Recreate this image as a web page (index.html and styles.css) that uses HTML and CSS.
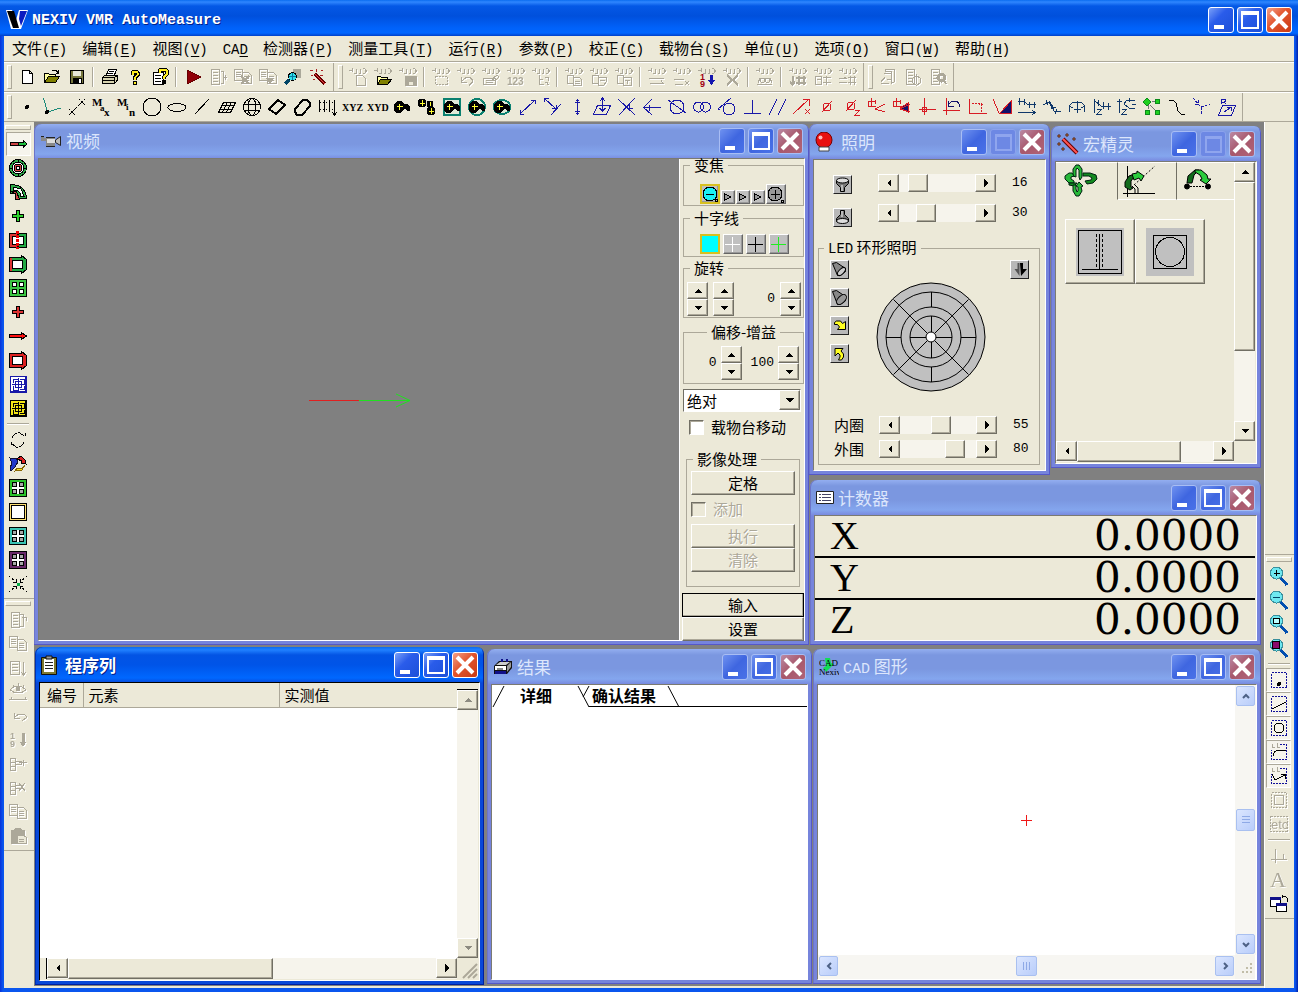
FILE: index.html
```html
<!DOCTYPE html>
<html lang="zh-CN">
<head>
<meta charset="utf-8">
<title>NEXIV VMR AutoMeasure</title>
<link rel="stylesheet" href="styles.css">
</head>
<body>
<svg class="defs" aria-hidden="true">
  <symbol id="hooks" viewBox="0 0 20 20"><path d="M4.500 1v4M1 3.500h3M8.500 2v4.500h-3M12.500 2v4.500h-2M14.500 1.500h2l1.500 2v1l-1.500 2h-2"/></symbol>
  <symbol id="doc" viewBox="0 0 20 20"><path d="M3.500 2.500h8v15h-8zM5 5.500h5M5 8.500h5M5 11.500h5M5 14.500h5"/></symbol>
  <symbol id="docs" viewBox="0 0 20 20"><path d="M1.500 2.500h8v11h-8zM3 5.500h5M3 7.500h5M3 9.500h5M9.500 5.500h6l3 3v8h-9zM11 9.500h5M11 11.500h5M11 13.500h5"/></symbol>
  <symbol id="blob" viewBox="0 0 20 20"><path d="M4 5l2-1h3l3 3h3l3 2v5h-3l-1-2h-2l-2 3-2 1H4l-2-2V8z" fill="#000" stroke="none"/><path d="M7.500 7v6M5 9.500h6" stroke="#ff3"/></symbol>
  <symbol id="lens" viewBox="0 0 20 20"><path d="M11 11l7 8" stroke="#024fb0" stroke-width="3"/><circle cx="7.500" cy="7" r="6" fill="#6ee8f0" stroke="#3a8f9c"/></symbol>
  <symbol id="grid4" viewBox="0 0 20 20"><path d="M1.500 1.500h17v17h-17z" fill="currentColor"/><path d="M4 4h12v12H4z" fill="#fff" stroke="none"/><path d="M4.500 4.500h4v4h-4zM11.500 4.500h4v4h-4zM4.500 11.500h4v4h-4zM11.500 11.500h4v4h-4z" fill="#a8a8a8"/></symbol>
  <symbol id="maze" viewBox="0 0 20 20"><path d="M2.500 2.500h15v15h-15zM10.500 4v13M4 10.500h13M5.500 9v-4h4M12 5.500h4v4M5.500 12v4h4M12 15.500h4v-4M7.500 7.500h6v6h-6z"/></symbol>
  <symbol id="min" viewBox="0 0 26 26"><path d="M6 18h10v4h-10z" fill="#fff" stroke="none"/></symbol>
  <symbol id="max" viewBox="0 0 26 26"><path d="M4 4h18v18h-18zM6 8v12h14v-12z" fill="#fff" fill-rule="evenodd" stroke="none"/></symbol>
  <symbol id="dim" viewBox="0 0 26 26"><path d="M5 5h17v17h-17zM7 8v12h13v-12z" fill="#8fa5ee" fill-rule="evenodd" stroke="none"/></symbol>
  <symbol id="close" viewBox="0 0 26 26"><path d="M5 5l16 16M21 5L5 21" stroke="#fff" stroke-width="4"/></symbol>
  <symbol id="up" viewBox="0 0 8 8"><path d="M0 6h8L4 2z"/></symbol>
  <symbol id="down" viewBox="0 0 8 8"><path d="M0 2h8L4 6z"/></symbol>
  <symbol id="left" viewBox="0 0 8 8"><path d="M6 0v8L2 4z"/></symbol>
  <symbol id="right" viewBox="0 0 8 8"><path d="M2 0v8l4-4z"/></symbol>
</svg>

<div class="app">
  <header class="apptitle">
    <svg class="logo" width="22" height="20"><path d="M0 0h6l4 10 3-10h9l-7 19h-10z" fill="#fff"/><path d="M1 1h7l5 17h-6z" fill="#000"/><path d="M14 1h7l-6 15-2-7z" fill="#0b1bc0"/></svg>
    <h1>NEXIV VMR AutoMeasure</h1>
    <div class="wbtns">
      <button class="wb" aria-label="最小化"><svg><use href="#min"/></svg></button>
      <button class="wb" aria-label="最大化"><svg><use href="#max"/></svg></button>
      <button class="wb red" aria-label="关闭"><svg><use href="#close"/></svg></button>
    </div>
  </header>

  <nav class="menu">
    <a href="#">文件<span>(<u>F</u>)</span></a>
    <a href="#">编辑<span>(<u>E</u>)</span></a>
    <a href="#">视图<span>(<u>V</u>)</span></a>
    <a href="#"><span>CA<u>D</u></span></a>
    <a href="#">检测器<span>(<u>P</u>)</span></a>
    <a href="#">测量工具<span>(<u>T</u>)</span></a>
    <a href="#">运行<span>(<u>R</u>)</span></a>
    <a href="#">参数<span>(<u>P</u>)</span></a>
    <a href="#">校正<span>(<u>C</u>)</span></a>
    <a href="#">载物台<span>(<u>S</u>)</span></a>
    <a href="#">单位<span>(<u>U</u>)</span></a>
    <a href="#">选项<span>(<u>O</u>)</span></a>
    <a href="#">窗口<span>(<u>W</u>)</span></a>
    <a href="#">帮助<span>(<u>H</u>)</span></a>
  </nav>

  <div class="tools">
    <div class="bar">
      <button aria-label="新建"><svg><path d="M5.500 3.500h7l3 3v10h-10zM12.500 3.500v3h3" fill="#fff"/></svg></button>
      <button aria-label="打开"><svg><path d="M2.500 15.500v-9h4l1 1h6v2" fill="#ffffa0"/><path d="M2.500 15.500l4-6h11l-4 6z" fill="#808000"/><path d="M10 3.500h4l2 2M16.500 3v3h-3"/></svg></button>
      <button aria-label="保存"><svg><path d="M3.500 3.500h13v13h-13z" fill="#77773c"/><path d="M6 4h8v5H6z" fill="#e8e8d8" stroke="none"/><path d="M6 11h9v6H6z" fill="#000" stroke="none"/><path d="M12 12h2v4h-2z" fill="#fff" stroke="none"/></svg></button>
      <i class="sep"></i>
      <button aria-label="打印"><svg><path d="M6.500 8l2-5.500h8L14.500 8" fill="#fff"/><path d="M9 4.500h5M8 6.500h5"/><path d="M2.500 10.500l3-2.500h12v5l-3 3.500h-12z" fill="#d8d4b0"/><path d="M2.500 10.500h12l3-2M14.500 10.500v6M3 13.500h11"/></svg></button>
      <button aria-label="帮助"><svg><path d="M7.500 8v-2l1-1.500h3l1 1.500v2l-2.500 2.500v2" stroke="#000" stroke-width="4"/><path d="M7.500 7.500v-1.500l1-1.500h3l1 1.500v2l-2.500 2.500v2" stroke="#ffee20" stroke-width="2"/><path d="M8 14h4v4h-4z" fill="#000" stroke="none"/><path d="M9 15h2v2h-2z" fill="#fe2" stroke="none"/></svg></button>
      <button aria-label="内容帮助"><svg><path d="M3.500 5.500h10v12h-10z" fill="#fff"/><path d="M5 8.500h6M5 11.500h6M5 14.500h6"/><path d="M9.500 6v-2.500l1-1h5l1.500 2v2.500l-3 3v2" stroke="#000" stroke-width="4"/><path d="M9.500 6v-2.500l1-1h5l1.500 2v2.500l-3 3v2" stroke="#fe2" stroke-width="2"/><path d="M12 13h4v4h-4z" fill="#000" stroke="none"/></svg></button>
      <i class="sep"></i>
      <button aria-label="运行"><svg><path d="M4 3l14 7-14 7z" fill="#900008" stroke="#600"/></svg></button>
      <button disabled aria-label="步进"><svg><use href="#doc"/><path d="M12.500 4.500h3v12h-3M16 10.500h3M17.500 8v5"/></svg></button>
      <button disabled aria-label="删除步骤"><svg><use href="#docs"/><path d="M8 9l8 8M16 9l-8 8" stroke-width="2"/></svg></button>
      <button disabled aria-label="标记步骤"><svg><use href="#docs"/><path d="M8 11l4 5 4-5z" fill="currentColor"/></svg></button>
      <button aria-label="查找"><svg><path d="M10 2h8v9h-8z" fill="#aaa89a" stroke="none"/><path d="M6 13l-4 4" stroke-width="3" stroke="#046"/><circle cx="9.500" cy="9.500" r="4" fill="#2fe0ea"/><path d="M9.500 6v7M6 9.500h7" stroke="#0878a0"/></svg></button>
      <button aria-label="宏精灵"><svg><path d="M7 7l10 10" stroke="#600" stroke-width="3"/><path d="M7 7l10 10" stroke="#e44"/><path d="M2 3.500h3M8 2v3M13 3.500h2M3 8.500h2M5 12.500h2M12 8.500h3" stroke="#a22"/></svg></button>
    </div>
    <div class="bar">
      <button disabled aria-label="新建示教"><svg><use href="#hooks"/><path d="M8.500 8.500h6l3 3v7h-9z"/></svg></button>
      <button aria-label="打开示教"><svg><g class="dis"><use href="#hooks"/></g><path d="M4.500 17.500v-8h3l1 1h6v2" fill="#ffffa0"/><path d="M4.500 17.500l3-5h11l-4 5z" fill="#808000"/></svg></button>
      <button disabled aria-label="保存示教"><svg><use href="#hooks"/><path d="M7 9h11v9h-11z" fill="currentColor"/><path d="M10 14h5v4h-5z" fill="#ece9d8"/></svg></button>
      <i class="sep"></i>
      <button disabled aria-label="选择"><svg><use href="#hooks"/><path d="M4.500 9.500h12v8h-12z" stroke-dasharray="2 1"/></svg></button>
      <button disabled aria-label="撤消"><svg><use href="#hooks"/><path d="M5.500 10v5h5M6 14l4-3.500h4l2 2v3l-3 3"/></svg></button>
      <button disabled aria-label="编辑"><svg><use href="#hooks"/><path d="M2.500 11.500h12v6h-12zM5 13.500h7M5 15.500h7M11 12l5-4 2 2-4 4z"/></svg></button>
      <button disabled aria-label="编号"><svg><use href="#hooks"/><text x="1" y="18" class="n">123</text></svg></button>
      <button disabled aria-label="分支"><svg><use href="#hooks"/><path d="M8.500 8v9.500h4M8.500 12.500h3M14 10.500h3v3M14 15.500h2v2h2"/></svg></button>
      <i class="sep"></i>
      <button disabled aria-label="复制"><svg><use href="#hooks"/><path d="M3.500 8.500h6v8h-6zM9.500 10.500h6l2 2v6h-8zM11 14.500h5M11 16.500h5"/></svg></button>
      <button disabled aria-label="复制点"><svg><use href="#hooks"/><path d="M3.500 8.500h6v8h-6zM9.500 10.500h8v4l-3 4h-5zM11 13.500h5"/></svg></button>
      <button disabled aria-label="复制线"><svg><use href="#hooks"/><path d="M3.500 8.500h6v8h-6zM9.500 10.500h8v8h-8zM11 13.500h5M13 12.500v4"/></svg></button>
      <i class="sep"></i>
      <button disabled aria-label="插入线"><svg><use href="#hooks"/><path d="M2 11.500h15M3 16.500h13l-2-3"/></svg></button>
      <button disabled aria-label="删除线"><svg><use href="#hooks"/><path d="M2 12.500h10M3 17.500h8M13 14l4 4M17 14l-4 4"/></svg></button>
      <button aria-label="排序"><svg><g class="dis"><use href="#hooks"/></g><text x="3" y="13" class="s9">1</text><text x="3" y="20" class="s9">9</text><path d="M14.500 8v7" stroke="#1416b0" stroke-width="3"/><path d="M11 13h7l-3.500 5z" fill="#1416b0" stroke="none"/></svg></button>
      <button disabled aria-label="清除"><svg><use href="#hooks"/><path d="M5 8l11 10M16 8L5 18" stroke-width="2"/></svg></button>
      <i class="sep"></i>
      <button disabled aria-label="查看"><svg><use href="#hooks"/><path d="M2 17.500h15M3 16l2-5h10l2 5"/><circle cx="7.500" cy="13.500" r="2"/><circle cx="12.500" cy="13.500" r="2"/></svg></button>
      <i class="sep"></i>
      <button disabled aria-label="排列一"><svg><use href="#hooks"/><path d="M4.500 9v8M2 14.500l2.500 3 2.500-3M8 10.500h10M8 15.500h10M10.500 9v9M15.500 9v9" stroke-width="2"/></svg></button>
      <button disabled aria-label="排列二"><svg><use href="#hooks"/><path d="M2.500 9.500h6v8h-6zM4 12.500h4M10 10.500h8M10 15.500h8M13.500 9v9"/></svg></button>
      <button disabled aria-label="排列三"><svg><use href="#hooks"/><path d="M1 11.500h8M1 15.500h8M6 10l3 2M10 10.500h8M10 15.500h8M12.500 9v9M16.500 9v9"/></svg></button>
    </div>
    <div class="bar">
      <button disabled aria-label="报告"><svg><path d="M7.500 2.500h9v12l-3 2v-12h-6zM5.500 6.500h8v6h-5M3 16.500h8M3 14.500l4-4"/></svg></button>
      <button disabled aria-label="刷新报告"><svg><use href="#doc"/><path d="M9.500 11.500l4-3 4 3v4l-4 3-4-3zM13.500 7v10"/></svg></button>
      <button disabled aria-label="报告设置"><svg><use href="#doc"/><circle cx="13.500" cy="10.500" r="3.500" stroke-width="3"/><path d="M16 13l2 4" stroke-width="2"/></svg></button>
    </div>
  </div>

  <div class="tools">
    <div class="bar">
      <button aria-label="点"><svg><circle cx="10" cy="10" r="2" fill="#000" stroke="none"/></svg></button>
      <button aria-label="原点"><svg><path d="M1.500 1l4 14 13-4" stroke="#1b8a78"/><circle cx="5" cy="15" r="2" fill="#000" stroke="none"/></svg></button>
      <button aria-label="距离"><svg><path d="M5 15L15 5" stroke-dasharray="3 1"/><path d="M2 12l6 6M8 12l-6 6M12 2l6 6M18 2l-6 6" stroke-dasharray="2 1"/></svg></button>
      <button aria-label="最大"><svg><text x="0" y="9" class="m">M</text><text x="8" y="14" class="m s">a</text><text x="12" y="19" class="m">x</text></svg></button>
      <button aria-label="最小"><svg><text x="0" y="9" class="m">M</text><text x="9" y="13" class="m s">i</text><text x="12" y="19" class="m">n</text></svg></button>
      <button aria-label="圆"><svg><circle cx="10" cy="10" r="9"/></svg></button>
      <button aria-label="椭圆"><svg><ellipse cx="10" cy="10.500" rx="9" ry="4"/></svg></button>
      <button aria-label="直线"><svg><path d="M3 17L17 2"/></svg></button>
      <button aria-label="平面"><svg><path d="M6.500 5.500h12l-5 10h-12zM5 8.500h12M3 12.500h12M10.500 5l-5 10M14.500 5l-5 10"/></svg></button>
      <button aria-label="球"><svg><circle cx="10" cy="10" r="8.500"/><ellipse cx="10" cy="10" rx="4" ry="8.500"/><path d="M2 7.500h16M2 13.500h16"/></svg></button>
      <button aria-label="矩形"><svg><path d="M2 12L11 3l7 5-9 9z" stroke-width="2"/></svg></button>
      <button aria-label="键槽"><svg><path d="M3 12l8-9h4l3 3v3l-8 9H5l-2-3z" stroke-width="2"/></svg></button>
      <button aria-label="间距"><svg><path d="M2.500 3v12M7.500 3v12M12.500 3v12M17.500 3v15"/><path d="M3 5.500h14M3 12.500h14" stroke-dasharray="1 2"/><path d="M15 15l2.500 3 2.500-3"/></svg></button>
      <button aria-label="XYZ"><svg><text x="0" y="14" class="x">XYZ</text></svg></button>
      <button aria-label="XYD"><svg><text x="0" y="14" class="x">XYD</text></svg></button>
      <button aria-label="轮廓"><svg><use href="#blob"/></svg></button>
      <button aria-label="多重轮廓"><svg><circle cx="5" cy="6" r="4" fill="#000"/><circle cx="13" cy="7" r="3" fill="#000"/><circle cx="14" cy="14" r="4" fill="#000"/><path d="M5.500 3v6M3 6.500h5M13.500 5v4M14.500 11v6M12 14.500h5" stroke="#ff3"/></svg></button>
      <button aria-label="方形区域"><svg><path d="M2 2h16v16H2z" fill="#dfe9d8" stroke="#0a8070" stroke-width="2"/><use href="#blob"/></svg></button>
      <button aria-label="圆形区域"><svg><circle cx="10" cy="10" r="8" fill="#dfe9d8" stroke="#0a8070" stroke-width="2"/><use href="#blob"/></svg></button>
      <button aria-label="椭圆区域"><svg><ellipse cx="10" cy="10" rx="8.500" ry="7" fill="#dfe9d8" stroke="#0a8070" stroke-width="2"/><use href="#blob"/></svg></button>
      <button class="b" aria-label="点点距离"><svg><path d="M3 17L18 3M3 13v4h4M14 3h4v4"/></svg></button>
      <button class="b" aria-label="点线距离"><svg><path d="M2 1l12 11M2.500 5v-4h4M10 11.500h4v-4M9 18L19 7"/></svg></button>
      <button class="b" aria-label="垂直距离"><svg><path d="M10.500 2v16M8 5.500h5M9 3.500h3M8 14.500h5M9 16.500h3"/></svg></button>
      <button class="b" aria-label="点面距离"><svg><path d="M5.500 8.500h13l-4 9h-13zM10.500 1v13M8 4l2.500-3 2.500 3M7.500 11l3 3 3-3"/></svg></button>
      <button class="b" aria-label="交点"><svg><path d="M1 2l17 16M18 1L2 18M12.500 7v4l3 1"/></svg></button>
      <button class="b" aria-label="中线"><svg><path d="M1 10.500h18M10 2L1.500 10.500 10 18M7.500 7.500v6"/></svg></button>
      <button class="b" aria-label="圆线"><svg><circle cx="10" cy="10" r="7"/><path d="M1 3l18 13"/></svg></button>
      <button class="b" aria-label="双圆"><svg><circle cx="6.500" cy="10" r="5"/><circle cx="13.500" cy="10" r="5"/></svg></button>
      <button class="b" aria-label="切线"><svg><circle cx="12" cy="12" r="6"/><path d="M1 12L14 1M1 12.500h2"/></svg></button>
      <button class="b" aria-label="垂直"><svg><path d="M2 16.500h17M10.500 3v13"/></svg></button>
      <button class="b" aria-label="平行"><svg><path d="M2 18L10 2M11 18L19 2"/></svg></button>
      <button class="r" aria-label="坐标 X"><svg><path d="M1 17L17 2M11 2.500h6v6M13 12l5 5M18 12l-5 5"/></svg></button>
      <button class="r" aria-label="直径"><svg><circle cx="10" cy="10" r="4"/><path d="M5 15L15 4"/></svg></button>
      <button class="r" aria-label="直径 Z"><svg><circle cx="9" cy="9" r="4"/><path d="M4 14L14 3M13 13.500h4l-4 5h5"/></svg></button>
      <button class="r" aria-label="角度"><svg><path d="M18 7L8 12l10 3M1 4.500h8M4.500 1v8M8.500 3v4M1.500 4v5h7"/></svg></button>
      <button class="r" aria-label="填充角度"><svg><path d="M8 11l8-5v9z" fill="#10106a"/><path d="M18 7L8 12l10 3M1 4.500h8M4.500 1v8M8.500 3v4M1.500 4v5h7"/></svg></button>
      <button class="r" aria-label="设置原点"><svg><path d="M7.500 1v17M2 12.500h17"/><circle cx="7.500" cy="12.500" r="2.500"/></svg></button>
      <button class="r" aria-label="旋转坐标"><svg><path d="M4.500 1v17M1 13.500h17"/><path d="M6 8l4-4h5l2 3v3M6.500 4v5h5" stroke="#10106a"/></svg></button>
      <button class="r" aria-label="移动坐标"><svg><path d="M2.500 2v14h17"/><path d="M5 6.500h9v8M12 8l2-2 2 2" stroke-dasharray="2 1"/></svg></button>
      <button class="r" aria-label="平面坐标"><svg><path d="M8 16L19 4v12z" fill="#10106a"/><path d="M1 2l6 14h12"/></svg></button>
      <button class="n1" aria-label="直线扫描"><svg><path d="M1 4.500h6l4 3h8M2.500 1v7M7.500 2v6M12.500 5v6M17.500 5v6M1 15.500h17M15 13l3 2.500-3 2.500"/></svg></button>
      <button class="n1" aria-label="曲线扫描"><svg><path d="M1 8l6-3 5 9 7 1M4 3l2 5M7 4l4 6M9 12l5-2M13 17l2-5"/></svg></button>
      <button class="n1" aria-label="圆弧扫描"><svg><path d="M3 15q-3-10 7-10t7 10M7 12.500h7M10.500 4v12M2 9l4 2M18 9l-4 2"/></svg></button>
      <button class="n1" aria-label="Z 扫描"><svg><path d="M2.500 2v14M3 4l6 5h10M6.500 3v6M11.500 5v7M16.500 6v7M5 12.500h4l-4 5h5"/></svg></button>
      <button class="n1" aria-label="Z 圆弧扫描"><svg><path d="M2.500 2v14M0 4h5M5 12.500h4l-4 5h5M18 3h-8l-3 4 5 4h6M12.500 1v4M15 7h4"/></svg></button>
      <button aria-label="图案"><svg><path d="M8 8l6 6M6 8v4M10 4h3" stroke="#777"/><path d="M1 5l4-4 4 4-4 4zM13 2h4v4h-4zM3 13h4v4H3zM13 13h4v4h-4z" fill="#1ed01e" stroke="#0a8a1a"/></svg></button>
      <button aria-label="曲线"><svg><path d="M2 3h4l3 3 2 8 3 3h4"/></svg></button>
      <button class="b" aria-label="交叉方向"><svg><path d="M1 1l8 9 9-3M9 10v8M6 3v4H2" stroke-dasharray="3 1"/></svg></button>
      <button class="b" aria-label="参考平面"><svg><path d="M5.500 8.500h13l-4 10h-13zM7 15l6-4M10 10.500h4v3"/><path d="M4.500 7v-5h3l1 1v1l-1 1h-3M7 5l2 2"/></svg></button>
    </div>
  </div>

  <main class="work">
    <aside class="side">
      <div class="vbar">
        <button class="on" aria-label="边缘"><svg><path d="M2 8.500h9v3H2z" fill="#c44"/><path d="M10 8.500h5v-2l4 3.500-4 3.500v-2h-5z" fill="#1fbf3f"/></svg></button>
        <button aria-label="圆环"><svg><circle cx="10" cy="10" r="8.500" fill="#2fae4a"/><circle cx="10" cy="10" r="6" fill="#fff"/><circle cx="10" cy="10" r="4" fill="#d44"/><circle cx="10" cy="10" r="2" fill="#fff"/><path d="M10 2v3M10 15v3M2 10h3M15 10h3"/></svg></button>
        <button aria-label="扇形"><svg><path d="M2.500 2.500q15 0 16 14h-9v-5h-7z" fill="#2fae4a"/><path d="M5 5l8 2 3 7h-4v-3l-3-3H5z" fill="#fff"/><path d="M2.500 9.500l5 2v6h4l-3-8z" fill="#c44"/></svg></button>
        <button aria-label="绿十字"><svg><path d="M8.500 4.500h3v4h4v3h-4v4h-3v-4h-4v-3h4z" fill="#2dd02d"/></svg></button>
        <button aria-label="双框"><svg><path d="M1.500 3.500h8v14h-8z" fill="#d33"/><path d="M10.500 3.500h8v14h-8z" fill="#2a4"/><path d="M4.500 6.500h11v8h-11z" fill="#fff"/><path d="M9.500 1v18" stroke="#e00" stroke-width="3" stroke-dasharray="3 1"/></svg></button>
        <button aria-label="框扫描"><svg><path d="M1.500 3.500h12v-2l5 4v10l-5 4v-2h-12z" fill="#2a4"/><path d="M4.500 6.500h10v8h-10z" fill="#fff"/><path d="M2 4h2v13H2z" fill="#d33" stroke="none"/></svg></button>
        <button aria-label="绿网格"><svg><path d="M1.500 1.500h17v17h-17z" fill="#3cc644"/><path d="M4.500 4.500h4v4h-4zM11.500 4.500h4v4h-4zM4.500 11.500h4v4h-4zM11.500 11.500h4v4h-4z" fill="#fff"/></svg></button>
        <button aria-label="红十字"><svg><path d="M8.500 4.500h3v4h4v3h-4v4h-3v-4h-4v-3h4z" fill="#d33"/></svg></button>
        <button aria-label="红箭头"><svg><path d="M1.500 8.500h12v-2l5 3.500-5 3.500v-2h-12z" fill="#f11"/></svg></button>
        <button aria-label="红框"><svg><path d="M1.500 3.500h12v-2l5 4v10l-5 4v-2h-12z" fill="#d22"/><path d="M4.500 6.500h10v8h-10z" fill="#fff"/></svg></button>
        <button class="b" aria-label="蓝迷宫"><svg><path d="M2 2h16v16H2z" fill="#fff"/><use href="#maze"/></svg></button>
        <button aria-label="黄迷宫"><svg><path d="M2 2h16v16H2z" fill="#f5e616"/><use href="#maze"/></svg></button>
        <i class="hsep"></i>
        <button aria-label="旋转"><svg><path d="M4 8q3-6 8-5l4 3M17 6v-3M16 12q-3 6-8 5l-5-4M3 12v4" stroke-dasharray="3 1"/></svg></button>
        <button aria-label="循环"><svg><path d="M2 4l4 1 2-1 2 4-3 5-4 4-1-4 2-3z" fill="#2238c8" stroke="#113"/><path d="M9 5l4-3 4 4 1 4-5-1 1-2z" fill="#d22"/><path d="M17 11l-3 5-7 1 2-3h5z" fill="#f5e020" stroke="#860"/></svg></button>
        <button aria-label="视图一"><svg color="#2cc32c"><use href="#grid4"/></svg></button>
        <button aria-label="视图二"><svg><path d="M1.500 1.500h17v17h-17z" fill="#ffe070"/><path d="M3.500 3.500h13v13h-13z" fill="#fff"/></svg></button>
        <button aria-label="视图三"><svg color="#3cc4b4"><use href="#grid4"/></svg></button>
        <button aria-label="视图四"><svg color="#6a2a6a"><use href="#grid4"/></svg></button>
        <button aria-label="收拢"><svg><path d="M1 2l6 5M19 2l-6 5M1 18l6-5M19 18l-6-5" stroke-dasharray="2 2"/><path d="M5 8h3v-3M15 8h-3v-3M5 12h3v3M15 12h-3v3"/><path d="M9 9h2v2H9z" fill="#0a4" stroke="#0a4"/></svg></button>
      </div>
      <div class="vbar low">
        <button disabled aria-label="步进"><svg><use href="#doc"/><path d="M11.500 4.500h4v12h-4M14 7.500h4v3"/></svg></button>
        <button disabled aria-label="复制"><svg><use href="#docs"/></svg></button>
        <button disabled aria-label="向下"><svg><path d="M2.500 3.500h9v13h-9zM4 6.500h6M4 9.500h6M4 12.500h6M15.500 4v12M13 14l2.500 3 2.500-3"/></svg></button>
        <button disabled aria-label="预览"><svg><path d="M2 8q8-8 16 0q-8 6-16 0M5 3v3M10 1v3M15 3v3M1 17.500h18M3 15v3M17 15v3"/><circle cx="10" cy="7" r="2" fill="currentColor"/></svg></button>
        <button disabled aria-label="撤消"><svg><path d="M6.500 7v5h5M7 11l4-3h5l2 2v2l-4 3"/></svg></button>
        <button disabled aria-label="排序"><svg><text x="2" y="9" class="s9">1</text><text x="2" y="17" class="s9">9</text><path d="M15 3v10" stroke-width="3"/><path d="M12 12h6l-3 4z" fill="currentColor"/></svg></button>
        <button disabled aria-label="插入"><svg><path d="M2.500 4.500h5v4h-5zM2.500 8.500h5v4h-5zM2.500 12.500h5v4h-5zM7 7h6v3H7zM11 8.500h8M15.500 6v6"/></svg></button>
        <button disabled aria-label="删除"><svg><path d="M2.500 4.500h5v4h-5zM2.500 8.500h5v4h-5zM2.500 12.500h5v4h-5zM7 7h6v3H7zM11 5l6 8M17 5l-6 8"/></svg></button>
        <button disabled aria-label="复制结果"><svg><use href="#docs"/></svg></button>
        <button disabled aria-label="粘贴"><svg><path d="M3 4h3l2-2h4l2 2h2v5h-5v8H3z" fill="currentColor"/><path d="M9.500 9.500h6l3 2v6h-9zM11 13.500h5M11 15.500h5" fill="#ece9d8"/></svg></button>
      </div>
    </aside>

    <div class="desk">
      <section class="win video">
        <header class="wt"><svg class="wi" width="22" height="14"><path d="M1 2h3v2h11v9H6V7H1z" fill="#888"/><path d="M7 5h8v4H7z" fill="#ddd"/><path d="M15.500 6l5-3.500v9l-5-3z" fill="#bbb" stroke="#222"/><path d="M1 2.500h3M6 3.500h9M6 12.500h9" stroke="#222"/></svg><h2>视频</h2>
          <div class="wbtns"><button class="wb" aria-label="最小化"><svg><use href="#min"/></svg></button><button class="wb" aria-label="最大化"><svg><use href="#max"/></svg></button><button class="wb red" aria-label="关闭"><svg><use href="#close"/></svg></button></div></header>
        <div class="wc vbody">
          <div class="screen"><svg width="104" height="16"><path d="M2 8.500h50" stroke="#e02020"/><path d="M52 8.500h50M89 2l14 6.500-14 6.500" stroke="#20e020"/></svg></div>
          <div class="panel">
            <fieldset class="f1"><legend>变焦</legend>
              <button class="ic y" aria-label="缩小"><svg><circle cx="8" cy="8" r="7" fill="#19f0f5"/><path d="M4 8.500h8M13 13h2v2h-2z"/></svg></button>
              <button class="ic sm" aria-label="低"><svg><path d="M2.500 2.500v7l6-3.500z" fill="#999"/></svg></button>
              <button class="ic sm" aria-label="中"><svg><path d="M2.500 2.500v7l6-3.500z" fill="#999"/></svg></button>
              <button class="ic sm" aria-label="高"><svg><path d="M2.500 2.500v7l6-3.500z" fill="#999"/></svg></button>
              <button class="ic" aria-label="放大"><svg><circle cx="8" cy="8" r="7" fill="#999"/><path d="M4 8.500h9M8.500 4v9M14 14h2v2h-2z"/></svg></button>
            </fieldset>
            <fieldset class="f2"><legend>十字线</legend>
              <button class="ic y" aria-label="无"><svg><path d="M0 0h20v20H0z" fill="#0ff" stroke="none"/></svg></button>
              <button class="ic" aria-label="白"><svg><path d="M8.500 1v15M1 8.500h15" stroke="#fff"/></svg></button>
              <button class="ic" aria-label="黑"><svg><path d="M8.500 1v15M1 8.500h15"/></svg></button>
              <button class="ic" aria-label="绿"><svg><path d="M8.500 1v15M1 8.500h15" stroke="#2e2"/></svg></button>
            </fieldset>
            <fieldset class="f3"><legend>旋转</legend>
              <div class="spin"><button aria-label="加"><svg><use href="#up"/></svg></button><button aria-label="减"><svg><use href="#down"/></svg></button></div>
              <div class="spin"><button aria-label="加"><svg><use href="#up"/></svg></button><button aria-label="减"><svg><use href="#down"/></svg></button></div>
              <output>0</output>
              <div class="spin"><button aria-label="加"><svg><use href="#up"/></svg></button><button aria-label="减"><svg><use href="#down"/></svg></button></div>
            </fieldset>
            <fieldset class="f4"><legend>偏移-增益</legend>
              <output>0</output>
              <div class="spin"><button aria-label="加"><svg><use href="#up"/></svg></button><button aria-label="减"><svg><use href="#down"/></svg></button></div>
              <output>100</output>
              <div class="spin"><button aria-label="加"><svg><use href="#up"/></svg></button><button aria-label="减"><svg><use href="#down"/></svg></button></div>
            </fieldset>
            <div class="combo"><select aria-label="坐标方式"><option>绝对</option></select><span class="arrow"><svg><use href="#down"/></svg></span></div>
            <label class="chk"><input type="checkbox">载物台移动</label>
            <fieldset class="f5"><legend>影像处理</legend>
              <button class="btn">定格</button>
              <label class="chk off"><input type="checkbox" disabled>添加</label>
              <button class="btn" disabled>执行</button>
              <button class="btn" disabled>清除</button>
            </fieldset>
            <button class="btn def">输入</button>
            <button class="btn">设置</button>
          </div>
        </div>
      </section>

      <section class="win light">
        <header class="wt"><svg class="wi" width="18" height="20"><circle cx="9" cy="8" r="8" fill="#e81010" stroke="#700"/><path d="M4 15h10v4H4z" fill="#fff" stroke="#444"/><circle cx="5.500" cy="5.500" r="2" fill="#fbb"/></svg><h2>照明</h2>
          <div class="wbtns"><button class="wb" aria-label="最小化"><svg><use href="#min"/></svg></button><button class="wb" disabled aria-label="最大化"><svg><use href="#dim"/></svg></button><button class="wb red" aria-label="关闭"><svg><use href="#close"/></svg></button></div></header>
        <div class="wc lbody">
          <div class="lrow"><button class="lic" aria-label="同轴光"><svg><path d="M2.500 4.500h12v3l-4 4v4h-4v-4l-4-4z" fill="#777"/><ellipse cx="8.500" cy="4.500" rx="6" ry="2.500" fill="#ddd"/><path d="M8 9v6" stroke="#fff"/></svg></button>
            <div class="sb"><button aria-label="减"><svg><use href="#left"/></svg></button><input type="range" value="16" aria-label="同轴光"><button aria-label="加"><svg><use href="#right"/></svg></button></div><output>16</output></div>
          <div class="lrow"><button class="lic" aria-label="底光"><svg><path d="M6.500 1.500h4v4l4 4v3h-12v-3l4-4z" fill="#777"/><ellipse cx="8.500" cy="12" rx="6" ry="2.500" fill="#ddd"/><path d="M8 2v6" stroke="#fff"/></svg></button>
            <div class="sb"><button aria-label="减"><svg><use href="#left"/></svg></button><input type="range" value="30" aria-label="底光"><button aria-label="加"><svg><use href="#right"/></svg></button></div><output>30</output></div>
          <fieldset class="led"><legend><span>LED</span> 环形照明</legend>
            <div class="ring">
              <div class="lcol">
                <button class="lic" aria-label="内圈光"><svg><path d="M1.500 2.500l4-1 9 6v3l-5 4h-3z" fill="#888"/><ellipse cx="10.500" cy="10.500" rx="5" ry="2.500" transform="rotate(-45 10.500 10.500)" fill="#ccc"/></svg></button>
                <button class="lic" aria-label="外围光"><svg><path d="M1.500 2.500l4-1 9 6v4l-5 4h-3z" fill="#888"/><ellipse cx="10.500" cy="10.500" rx="6" ry="3.500" transform="rotate(-45 10.500 10.500)" fill="#999"/></svg></button>
                <button class="lic" aria-label="顺时针"><svg><path d="M3.500 5.500l2-1.500h4l2 2.500 3-2v8h-8l2-2.500-2-2.500h-3z" fill="#ff2"/></svg></button>
                <button class="lic" aria-label="逆时针"><svg><path d="M4 3.500h8l-2 2.500 2.500 3v3l-2 3h-3l1.500-3v-2l-2-2-3 3z" fill="#ff2"/></svg></button>
              </div>
              <svg class="dial" viewBox="0 0 110 110" width="110" height="110"><circle cx="55" cy="55" r="54" fill="#c0c0c0"/><circle cx="55" cy="55" r="45"/><circle cx="55" cy="55" r="30"/><circle cx="55" cy="55" r="21"/><path d="M17.500 17.500l75 75M92.500 17.500l-75 75M55.500 10v15M55.500 85v15M10 55.500h15M85 55.500h15M55.500 34v42M34 55.500h42"/><circle cx="55" cy="55" r="5" fill="#fff"/></svg>
              <button class="lic" aria-label="应用"><svg><path d="M3.500 8h3V2h2v13z" fill="#555" stroke="none"/><path d="M9 2h3v6h4l-6 7z" fill="#000" stroke="none"/></svg></button>
            </div>
            <div class="lrow"><label for="in">内圈</label><div class="sb"><button aria-label="减"><svg><use href="#left"/></svg></button><input id="in" type="range" value="55"><button aria-label="加"><svg><use href="#right"/></svg></button></div><output>55</output></div>
            <div class="lrow"><label for="out">外围</label><div class="sb"><button aria-label="减"><svg><use href="#left"/></svg></button><input id="out" type="range" value="80"><button aria-label="加"><svg><use href="#right"/></svg></button></div><output>80</output></div>
          </fieldset>
        </div>
      </section>

      <section class="win macro">
        <header class="wt"><svg class="wi" width="22" height="22"><path d="M6 6l14 14" stroke="#600" stroke-width="4"/><path d="M6 6l14 14" stroke="#f55" stroke-width="2"/><path d="M1 2h2v2H1zM9 1h2v2H9zM16 5h2v2h-2zM1 10h2v2H1zM5 15h2v2H5z" fill="#fa6" stroke="#521"/></svg><h2>宏精灵</h2>
          <div class="wbtns"><button class="wb" aria-label="最小化"><svg><use href="#min"/></svg></button><button class="wb" disabled aria-label="最大化"><svg><use href="#dim"/></svg></button><button class="wb red" aria-label="关闭"><svg><use href="#close"/></svg></button></div></header>
        <div class="wc mbody">
          <div class="mview">
            <div class="mtabs">
              <button class="sel" aria-label="元素宏"><svg width="34" height="34"><g stroke="#021"><path d="M9 12V5l3-4h3l3 4v8l-2 3-1-3V6l-2-2-1 2v7z" fill="#27b839"/><path d="M8 9H5l-4 3v3l4 4h5v-2l-3-2v-2l3-1z" fill="#27b839"/><path d="M5 19h8l-3 3-5-1z" fill="#138a20"/><path d="M19 9h7l6 2 1 4-4 4-6 1-2-3 6-1 1-2-3-2h-6z" fill="#138a20"/><path d="M9 21v6l3 5h3l3-5-1-4 2-1-4-4-3 4 2 1v4l-1 1-1-3v-4z" fill="#27b839"/></g></svg></button>
              <button aria-label="角度宏"><svg width="34" height="34"><path d="M5.500 2v31M1 29.500h32"/><path d="M12 21L33 2" stroke-dasharray="2 2"/><path d="M13 21l3 3v6M10 22l3 3v5"/><path d="M8 26l-5-3V18l4-6 6-2-1 3-3 4v6l2 1z" fill="#126b1c"/><path d="M10 10l5-1v-2l7 5-3 5-2-3-5 2z" fill="#2ccc3c"/></svg></button>
              <button aria-label="距离宏"><svg width="34" height="34"><path d="M6 22.500h22" stroke-dasharray="2 1"/><circle cx="6" cy="22.500" r="2.500" fill="#000"/><circle cx="27" cy="22.500" r="2.500" fill="#000"/><path d="M6 19l1-7 7-6h4l-5 5-2 8z" fill="#126b1c"/><path d="M14 6h6l6 5 1 4h3l-5 5-6-4 2-1-2-4-5-3z" fill="#2ccc3c"/></svg></button>
            </div>
            <div class="mgrid">
              <button aria-label="对称宏"><svg width="48" height="48"><path d="M2.500 2.500h43v43h-43zM6 41.500h36M23.500 6v35"/><path d="M20.500 6v35M26.500 6v35" stroke-dasharray="3 2"/></svg></button>
              <button aria-label="圆宏"><svg width="48" height="48"><path d="M7.500 7.500h33v33h-33z"/><circle cx="24" cy="24" r="14.500"/></svg></button>
            </div>
          </div>
          <div class="csb v"><button aria-label="上"><svg><use href="#up"/></svg></button><i class="thumb"></i><i class="track"></i><button aria-label="下"><svg><use href="#down"/></svg></button></div>
          <div class="csb h"><button aria-label="左"><svg><use href="#left"/></svg></button><i class="thumb"></i><i class="track"></i><button aria-label="右"><svg><use href="#right"/></svg></button></div>
        </div>
      </section>

      <section class="win counter">
        <header class="wt"><svg class="wi" width="18" height="14"><path d="M.5.5h17v12H.5z" fill="#fff" stroke="#222"/><path d="M3 3.500h2M6 3.500h9M3 6.500h2M6 6.500h9M3 9.500h2M6 9.500h9" stroke="#446"/></svg><h2>计数器</h2>
          <div class="wbtns"><button class="wb" aria-label="最小化"><svg><use href="#min"/></svg></button><button class="wb" aria-label="最大化"><svg><use href="#max"/></svg></button><button class="wb red" aria-label="关闭"><svg><use href="#close"/></svg></button></div></header>
        <div class="wc cbody">
          <div><b>X</b><output>0.0000</output></div>
          <div><b>Y</b><output>0.0000</output></div>
          <div><b>Z</b><output>0.0000</output></div>
        </div>
      </section>

      <section class="win prog active">
        <header class="wt"><svg class="wi" width="16" height="20"><path d="M.5 2.500h15v17H.5z" fill="#7d7a30" stroke="#111"/><path d="M3 4h10v13H3z" fill="#fff"/><path d="M5 1h6v3H5z" fill="#999" stroke="#111"/><path d="M4 7.500h8M4 10.500h8M4 13.500h8" stroke="#222"/></svg><h2>程序列</h2>
          <div class="wbtns"><button class="wb" aria-label="最小化"><svg><use href="#min"/></svg></button><button class="wb" aria-label="最大化"><svg><use href="#max"/></svg></button><button class="wb red" aria-label="关闭"><svg><use href="#close"/></svg></button></div></header>
        <div class="wc pbody">
          <div class="list"><table><thead><tr><th class="c1">编号</th><th class="c2">元素</th><th>实测值</th></tr></thead></table></div>
          <div class="csb v off"><i class="split"></i><button disabled aria-label="上"><svg><use href="#up"/></svg></button><i class="track"></i><button disabled aria-label="下"><svg><use href="#down"/></svg></button></div>
          <div class="csb h"><i class="split"></i><button aria-label="左"><svg><use href="#left"/></svg></button><i class="thumb"></i><i class="track"></i><button aria-label="右"><svg><use href="#right"/></svg></button></div>
          <svg class="grip" width="21" height="21"><path d="M20 6L6 20M20 11l-9 9M20 16l-4 4" stroke="#aca899" stroke-width="2"/></svg>
        </div>
      </section>

      <section class="win result">
        <header class="wt"><svg class="wi" width="20" height="17"><path d="M1 8l5-5h13v7l-5 6H1z" fill="#111"/><path d="M2 8h11v4H2z" fill="#fff"/><path d="M3 7l4-3h10l-4 3z" fill="#ccc"/><path d="M14 8l4-4v5l-4 5z" fill="#999"/><path d="M4 10h6v2H4z" fill="#888"/><path d="M2 13h11v3H2z" fill="#118"/><path d="M8 1h2v3H8zM13 1h2v3h-2z" fill="#118"/></svg><h2>结果</h2>
          <div class="wbtns"><button class="wb" aria-label="最小化"><svg><use href="#min"/></svg></button><button class="wb" aria-label="最大化"><svg><use href="#max"/></svg></button><button class="wb red" aria-label="关闭"><svg><use href="#close"/></svg></button></div></header>
        <div class="wc rbody">
          <div class="rtabs"><svg class="edge"><path d="M1 22L12 1M86 1l11 21M91 12l6-11M176 1l11 21"/><line x1="97" x2="100%" y1="21.500" y2="21.500"/></svg><button>详细</button><button>确认结果</button></div>
        </div>
      </section>

      <section class="win cad">
        <header class="wt"><svg class="wi" width="20" height="22"><path d="M6 2h5l1 5 3 1-6 6-2 2-3-4 3-2z" fill="#1d5"/><text x="0" y="10" class="k">CAD</text><text x="0" y="19" class="k">Nexiv</text></svg><h2><span>CAD</span> 图形</h2>
          <div class="wbtns"><button class="wb" aria-label="最小化"><svg><use href="#min"/></svg></button><button class="wb" aria-label="最大化"><svg><use href="#max"/></svg></button><button class="wb red" aria-label="关闭"><svg><use href="#close"/></svg></button></div></header>
        <div class="wc dbody">
          <div class="draw"><svg width="11" height="11"><path d="M5 0h1v11h-1zM0 5h11v1H0z" fill="#f01818"/></svg></div>
          <div class="xsb v"><button aria-label="上"><svg><path d="M1 6l3-3 3 3"/></svg></button><i></i><b><svg><path d="M0 .5h8M0 3.500h8M0 6.500h8"/></svg></b><i></i><button aria-label="下"><svg><path d="M1 3l3 3 3-3"/></svg></button></div>
          <div class="xsb h"><button aria-label="左"><svg><path d="M6 1L3 4l3 3"/></svg></button><i></i><b><svg><path d="M.5 0v8M3.500 0v8M6.500 0v8"/></svg></b><i></i><button aria-label="右"><svg><path d="M3 1l3 3-3 3"/></svg></button></div>
          <svg class="grip" width="20" height="24"><path d="M15 8h2v2h-2zM11 12h2v2h-2zM15 12h2v2h-2zM7 16h2v2H7zM11 16h2v2h-2zM15 16h2v2h-2z" fill="#c1bda8"/></svg>
        </div>
      </section>
    </div>

    <aside class="side right">
      <div class="vbar">
        <button aria-label="放大"><svg><use href="#lens"/><path d="M7.500 4v6M5 7.500h6"/></svg></button>
        <button aria-label="缩小"><svg><use href="#lens"/><path d="M4 7.500h7" stroke="#046"/></svg></button>
        <button aria-label="窗口缩放"><svg><use href="#lens"/><path d="M4.500 4.500h6v5h-6z" fill="#bff"/></svg></button>
        <button aria-label="全部缩放"><svg><use href="#lens"/><path d="M3.500 3.500h7v7h-7z" fill="#8a0a6a"/></svg></button>
        <i class="hsep"></i>
        <button class="on" aria-label="显示点"><svg><path d="M2.500 2.500h15v15h-15z" stroke="#119" stroke-dasharray="2 1"/><circle cx="10" cy="14" r="1.500" fill="#000"/></svg></button>
        <button class="on" aria-label="显示线"><svg><path d="M2.500 2.500h15v15h-15z" stroke="#119" stroke-dasharray="2 1"/><path d="M3 15l14-7"/></svg></button>
        <button class="on" aria-label="显示圆"><svg><path d="M2.500 2.500h15v15h-15z" stroke="#119" stroke-dasharray="2 1"/><circle cx="10" cy="10" r="5"/></svg></button>
        <button class="on" aria-label="显示弧"><svg><path d="M11 2.500h6.500v15h-15V8" stroke="#119" stroke-dasharray="2 1"/><path d="M3 2v3h3M8 1v4h3" stroke="#aca899"/><path d="M4 14q1-6 6-6h7"/></svg></button>
        <button class="on" aria-label="显示矢量"><svg><path d="M11 2.500h6.500v15h-15V8" stroke="#119" stroke-dasharray="2 1"/><path d="M3 2v3h3M8 1v4h3" stroke="#aca899"/><path d="M3 8l3 6 10-5M12 8.500h4v4"/></svg></button>
        <button disabled aria-label="显示框"><svg><path d="M2.500 2.500h15v15h-15z" stroke-dasharray="2 1"/><path d="M5.500 5.500h9v9h-9z"/></svg></button>
        <button disabled aria-label="其它"><svg><path d="M1.500 2.500h17v15h-17z" stroke-dasharray="2 1"/><text x="2" y="15" class="e">etc</text></svg></button>
        <i class="hsep"></i>
        <button disabled aria-label="坐标系"><svg><path d="M6.500 3v14M2 13.500h16M14.500 8v5h3"/></svg></button>
        <button disabled aria-label="文字"><svg><text x="1" y="17" class="a">A</text></svg></button>
        <button aria-label="窗口"><svg><path d="M1.500 3.500h10v9h-10z" fill="#fff"/><path d="M1 3h11v3H1z" fill="#118" stroke="none"/><path d="M7.500 9.500h10v8h-10z" fill="#fff"/><path d="M7 9h11v3H7z" fill="#118" stroke="none"/><path d="M13 2h3l2 2v4M13 4V1"/></svg></button>
      </div>
    </aside>
  </main>
</div>
</body>
</html>
```

FILE: styles.css
```css
* { box-sizing: border-box; }
html, body { height: 100%; margin: 0; }
body { font: 15px/18px "Noto Sans CJK SC", sans-serif; color: #000; background: #0831d9; overflow: hidden; }
button, select, input { font: inherit; color: inherit; margin: 0; padding: 0; border: 0; background: none; border-radius: 0; }
svg { display: block; flex: none; fill: none; stroke: none; }
h1, h2 { margin: 0; font-weight: normal; }
.defs { position: absolute; width: 0; height: 0; }

.app { display: flex; flex-direction: column; height: 100vh; padding: 0 4px 4px; background: linear-gradient(90deg, #0831d9, #0a56ee 3px, #0a56ee calc(100% - 3px), #0020a8); }

/* window captions */
.apptitle { display: flex; align-items: center; height: 36px; flex: none; margin: 0 -4px; padding: 3px 6px 0; background: linear-gradient(#0a6cf0, #2f86ff 2px, #0458e6 6px, #0050dc 16px, #0062fa 28px, #0066ff 33px, #0040c8); color: #fff; }
.apptitle h1 { flex: 1; margin-left: 4px; padding-top: 3px; font: bold 15px/20px "Liberation Mono", monospace; text-shadow: 1px 1px #00208a; }
.wbtns { display: flex; gap: 3px; }
.wb { width: 26px; height: 26px; border: 1px solid #fff; border-radius: 3px; background: linear-gradient(135deg, #7aa0f8, #2a5cea 40%, #1c4fd8); }
.wb svg { width: 26px; height: 26px; margin: -1px; }
.wb.red { background: linear-gradient(135deg, #f4a088, #e2552e 45%, #c83a14); }

.menu { display: flex; gap: 15px; height: 26px; flex: none; align-items: center; padding-left: 8px; background: #ece9d8; border-bottom: 1px solid #aca899; }
.menu a { color: #000; text-decoration: none; white-space: nowrap; }
.menu span { font: 14px/18px "Liberation Mono", monospace; }
.menu u { text-underline-offset: 2px; }

.tools { display: flex; height: 30px; flex: none; background: #ece9d8; border-top: 1px solid #fff; border-bottom: 1px solid #aca899; }
.bar { display: flex; align-items: center; padding: 0 3px 0 0; border-right: 1px solid #aca899; }
.bar::before { content: ""; width: 3px; height: 22px; margin: 0 2px 0 3px; border: 1px solid; border-color: #fff #aca899 #aca899 #fff; }
.bar + .bar::before { margin-left: 4px; }
.bar button { width: 25px; height: 24px; display: grid; place-items: center; }
.bar svg, .vbar svg { width: 20px; height: 20px; stroke: #000; shape-rendering: crispEdges; overflow: visible; }
.sep { width: 2px; height: 20px; margin: 0 3px; border-left: 1px solid #aca899; border-right: 1px solid #fff; }
.bar button:disabled svg, .vbar button:disabled svg { color: #aca899; stroke: #aca899; filter: drop-shadow(1px 1px 0 #fff); }
.dis { stroke: #aca899; }
.b svg { stroke: #1818a8; }
.r svg { stroke: #d81c24; }
.n1 svg { stroke: #10386a; }
svg text { stroke: none; fill: #000; shape-rendering: auto; }
.m { font: bold 11px "Liberation Serif", serif; }
.m.s { font-size: 9px; }
.x { font: bold 10px "Liberation Serif", serif; }
.bar .n { font: bold 10px "Liberation Sans", sans-serif; fill: #aca899; }
.bar .s9, .vbar .s9 { font: bold 9px "Liberation Sans", sans-serif; fill: #a00010; }
.vbar .s9 { fill: #aca899; }
.vbar .e { font: 13px "Liberation Sans", sans-serif; fill: #aca899; }
.vbar .a { font: 22px "Liberation Serif", serif; fill: #aca899; }
.k { font: 9px "Liberation Serif", serif; }

.work { display: flex; flex: 1; min-height: 0; background: #ece9d8; }
.side { width: 30px; flex: none; padding-top: 1px; background: #ece9d8; }
.vbar { display: flex; flex-direction: column; align-items: center; padding: 2px 2px 2px 0; border-bottom: 1px solid #aca899; }
.vbar::before { content: ""; width: 24px; height: 3px; margin-bottom: 2px; border: 1px solid; border-color: #fff #aca899 #aca899 #fff; }
.vbar button { width: 25px; height: 24px; display: grid; place-items: center; }
.vbar button.on { border: 1px solid; border-color: #aca899 #fff #fff #aca899; background: #f6f4ec; }
.hsep { width: 22px; height: 2px; margin: 3px 0; border-top: 1px solid #aca899; border-bottom: 1px solid #fff; }
.side.right { display: flex; flex-direction: column; justify-content: flex-end; padding-bottom: 69px; border-left: 1px solid #fff; }
.side.right .vbar { border-top: 1px solid #aca899; }

/* MDI desktop */
.desk { position: relative; flex: 1; min-width: 0; background: #808080; border-bottom: 2px solid #ece9d8; }
.win { position: absolute; display: flex; flex-direction: column; padding: 0 4px 4px; border-radius: 7px 7px 0 0; background: linear-gradient(#93aef0, #7b97e0 6px, #7b97e0 20px, #84a6ee 30px, #7684dc 36px, #7684dc); box-shadow: inset -1px -1px #5558c8, inset 1px 0 #6c74c8; }
.win.active { background: linear-gradient(#0a6cf0, #2080ff 3px, #0354e4 8px, #0054e8 18px, #0068ff 31px, #0848d8 36px, #0848d8); box-shadow: inset -1px -1px #0020a0, inset 1px 0 #0030b0; }
.video { left: 0; top: 2px; width: 775px; height: 521px; }
.light { left: 775px; top: 2px; width: 241px; height: 351px; }
.macro { left: 1017px; top: 4px; width: 210px; height: 342px; }
.counter { left: 776px; top: 358px; width: 451px; height: 165px; }
.prog { left: 1px; top: 525px; width: 449px; height: 338px; }
.result { left: 453px; top: 527px; width: 325px; height: 335px; }
.cad { left: 779px; top: 527px; width: 448px; height: 335px; }
.wt { display: flex; align-items: center; height: 35px; flex: none; padding: 0 2px; }
.video .wt { height: 34px; }
.light .wt { padding-right: 1px; }
.wt h2 { flex: 1; margin-left: 4px; font-size: 17px; line-height: 22px; color: #dce6fc; white-space: nowrap; }
.light h2, .prog h2 { margin-left: 8px; }
.wt h2 span { font: 15px "Liberation Mono", monospace; }
.active .wt h2 { font-weight: bold; color: #fff; text-shadow: 1px 1px #00208a; }
.win:not(.active) .wb { border-color: #a8bdf4; background: linear-gradient(135deg, #6f92f0, #3f66e0 50%, #4a72e8); }
.win:not(.active) .wb:disabled { background: #6d88e4; border-color: #8ba2ec; }
.win:not(.active) .wb.red { background: linear-gradient(135deg, #bb8aa4, #a8586c 50%, #b06478); }
.wc { flex: 1; min-height: 0; background: #ece9d8; border: 1px solid; border-color: #7a7a72 #fff #fff #7a7a72; }

/* raised controls */
.btn, .spin button, .sb button, .csb button, .csb .thumb, .arrow, .mgrid button { border: 1px solid; border-color: #fff #716f64 #716f64 #fff; box-shadow: inset -1px -1px #aca899; background: #ece9d8; }
.spin svg, .sb svg, .csb button svg, .arrow svg { width: 8px; height: 8px; fill: #000; shape-rendering: crispEdges; }
fieldset { min-width: 0; margin: 0; padding: 0; border: 1px solid #aca899; }
legend { padding: 0 4px; margin-left: 6px; line-height: 18px; }
output { font: 13px/18px "Liberation Mono", monospace; }

/* video */
.vbody { display: flex; }
.screen { flex: 1; display: grid; place-items: center; background: #808080; }
.panel { width: 125px; flex: none; display: flex; flex-direction: column; padding-left: 2px; border-left: 1px solid #fff; }
.panel fieldset { display: flex; width: 121px; flex: none; margin-left: 1px; }
.panel .f1 { margin-top: -3px; padding: 10px 16px 1px; gap: 1px; align-items: flex-end; }
.panel .f2 { margin-top: 3px; padding: 7px 14px 2px 16px; gap: 3px; }
.f1 legend, .f2 legend { margin-left: -10px; }
.panel .f3 { margin-top: 2px; padding: 5px 2px 1px 3px; gap: 5px; align-items: center; }
.f3 legend { margin-left: 3px; }
.panel .f4 { margin-top: 5px; padding: 5px 4px 3px 4px; gap: 4px; align-items: center; }
.panel .f4 legend { margin: 0 auto; }
.panel fieldset output { flex: 1; text-align: right; }
.ic { width: 20px; height: 20px; border: 1px solid; border-color: #fff #666 #666 #fff; background: #c0c0c0; box-shadow: inset -1px -1px #999; overflow: hidden; flex: none; }
.ic svg { width: 17px; height: 17px; stroke: #000; shape-rendering: crispEdges; }
.ic.sm { width: 14px; height: 14px; }
.ic.sm svg { width: 12px; height: 12px; }
.ic.y { border: 2px solid #d8c020; }
.spin { width: 21px; flex: none; display: flex; flex-direction: column; }
.spin button { height: 17px; display: grid; place-items: center; }
.combo { position: relative; height: 23px; flex: none; margin: 5px 3px 0 1px; border: 1px solid; border-color: #716f64 #fff #fff #716f64; background: #fff; }
.combo select { appearance: none; display: block; width: 100%; height: 21px; padding: 0 3px; line-height: 18px; }
.combo .arrow { position: absolute; right: 0; top: 0; width: 21px; height: 20px; display: grid; place-items: center; pointer-events: none; }
.arrow svg { width: 10px; height: 10px; }
.chk { display: flex; align-items: center; gap: 7px; height: 18px; flex: none; margin: 6px 0 0 7px; }
.chk input { appearance: none; width: 15px; height: 15px; background: #fff; border: 1px solid; border-color: #716f64 #fff #fff #716f64; box-shadow: inset 1px 1px #aca899; }
.off { color: #aca899; text-shadow: 1px 1px #fff; }
.chk.off input { background: #ece9d8; }
.panel .f5 { flex-direction: column; width: 114px; margin: 14px 0 6px 4px; padding: 3px 4px 14px; }
.f5 legend { margin-left: 2px; }
.f5 .chk { margin: 5px 0 6px 0; }
.btn { height: 24px; flex: none; line-height: 20px; }
.btn:disabled { color: #aca899; text-shadow: 1px 1px #fff; }
.btn.def { outline: 1px solid #000; outline-offset: -1px; }

/* lighting */
.lbody { padding: 14px 5px 5px 4px; display: flex; flex-direction: column; }
.lrow { display: grid; grid-template-columns: 45px 118px 1fr; height: 24px; align-items: center; padding-left: 15px; }
.lbody > .lrow { height: 30px; padding-left: 15px; align-items: start; }
.lbody > .lrow + .lrow .lic { margin-top: 4px; }
.lrow output { padding-left: 16px; }
.lic { width: 19px; height: 19px; border: 1px solid; border-color: #fff #222 #222 #fff; background: #b8b8b8; flex: none; }
.lbody .lic { margin-top: 1px; }
.lic svg { width: 17px; height: 17px; stroke: #000; }
.sb { display: grid; grid-template-columns: 21px 1fr 21px; height: 18px; }
.sb button { display: grid; place-items: center; }
.sb input { appearance: none; width: 100%; height: 18px; background: #f6f4ec; }
.sb input::-webkit-slider-thumb { appearance: none; width: 20px; height: 18px; border: 1px solid; border-color: #fff #716f64 #716f64 #fff; box-shadow: inset -1px -1px #aca899; background: #ece9d8; }
.led { margin-top: 4px; flex: 1; padding: 1px 0 3px; display: flex; flex-direction: column; }
.led legend { margin-left: 5px; }
.led legend span { font: 14px/18px "Liberation Mono", monospace; }
.ring { display: flex; justify-content: space-between; padding: 0 10px 0 11px; flex: 1; }
.lcol { display: flex; flex-direction: column; gap: 8px; }
.dial { margin: 23px 0 0 2px; stroke: #000; }

/* macro */
.mbody { display: grid; grid-template: 1fr 21px / 1fr 21px; padding: 0 1px 1px 0; }
.mview { min-width: 0; }
.mtabs { display: flex; height: 38px; }
.mtabs button { flex: 1; padding: 0 0 0 4px; border-top: 1px solid #fff; border-right: 1px solid #716f64; border-bottom: 1px solid #fff; }
.mtabs button.sel { border-bottom-color: #ece9d8; padding-left: 8px; }
.mtabs button:last-child { border-right: 0; }
.mtabs svg { stroke: #000; }
.mgrid { display: flex; padding: 19px 0 0 9px; }
.mgrid button { width: 70px; height: 65px; display: grid; place-items: center; }
.mgrid svg { background: #c0c0c0; stroke: #000; shape-rendering: crispEdges; }
.csb { display: flex; background: #f6f4ec; }
.csb.v { flex-direction: column; }
.csb button { width: 21px; height: 20px; flex: none; display: grid; place-items: center; }
.macro .v .thumb { flex: 12; }
.macro .v .track { flex: 5; }
.macro .h .thumb { flex: 16; }
.macro .h .track { flex: 5; }
.csb.off .track { flex: 1; }
.csb.off svg { opacity: .4; }

/* counter */
.cbody { display: flex; flex-direction: column; padding-right: 1px; }
.cbody div { flex: 1; display: flex; justify-content: space-between; align-items: center; padding: 0 14px 0 15px; border-bottom: 2px solid #000; }
.cbody div:last-child { border-bottom: 0; }
.cbody b { font: 40px/38px "Liberation Serif", serif; }
.cbody output { font: 42px/38px "DejaVu Serif", serif; }

/* program list */
.pbody { display: grid; grid-template: 1fr 21px / 1fr 21px; border-color: #000 #fff #fff #000; padding: 0 1px 1px 0; }
.list { background: #fff; }
table { width: 100%; border-collapse: collapse; table-layout: fixed; }
th { height: 24px; padding: 0 5px; text-align: left; font-weight: normal; background: #ece9d8; border-right: 1px solid #aca899; border-bottom: 1px solid #aca899; }
th:last-child { border-right: 0; }
.c1 { width: 43px; padding: 0 0 0 7px; }
.c2 { width: 196px; }
.v .split { height: 7px; border-bottom: 1px solid #000; background: #ece9d8; }
.h .split { width: 7px; border-right: 1px solid #000; background: #ece9d8; }
.prog .h .thumb { flex: 5; }
.prog .h .track { flex: 4; }
.grip { background: #ece9d8; }

/* result */
.rbody { background: #fff; }
.rtabs { position: relative; display: flex; height: 22px; font-weight: bold; }
.rtabs .edge { position: absolute; inset: 0; width: 100%; height: 22px; stroke: #000; }
.rtabs button { position: relative; height: 20px; padding: 0 20px 0 28px; font-size: 16px; line-height: 20px; }
.rtabs button + button { padding: 0 20px; }

/* CAD */
.dbody { display: grid; grid-template: 1fr 24px / 1fr 21px; background: #fff; }
.draw { display: grid; place-items: center; }
.xsb { display: flex; background: #f7f6f2; padding: 1px; }
.xsb.v { flex-direction: column; }
.xsb i { flex: 1; }
.xsb button, .xsb b { width: 19px; height: 20px; flex: none; display: grid; place-items: center; border: 1px solid #a9c0f0; border-radius: 2px; background: linear-gradient(135deg, #dbe6ff, #b9cdfa); }
.xsb b { height: 22px; }
.xsb.h b { width: 21px; height: 20px; }
.xsb svg { width: 8px; height: 8px; stroke: #4d6185; stroke-width: 2; }
.xsb b svg { stroke: #8ea9e6; stroke-width: 1; }
.cad .grip { background: #f4f3ee; }
```
